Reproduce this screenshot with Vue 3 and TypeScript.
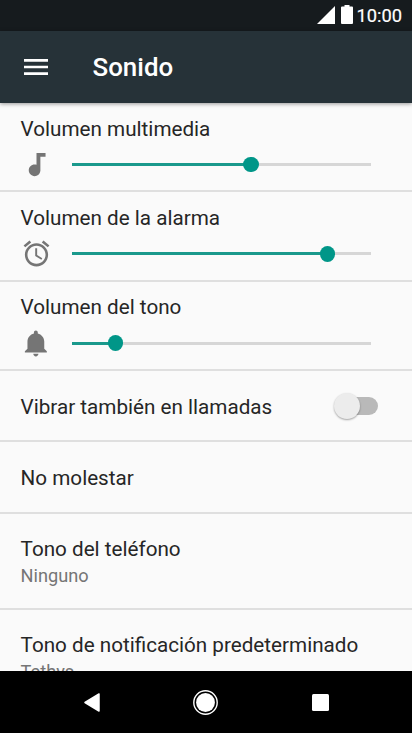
<script setup lang="ts">
import { ref } from 'vue'

interface VolumeSetting {
  id: string
  label: string
  value: number
  path: string
}

interface Preference {
  title: string
  summary?: string
}

const volumes = ref<VolumeSetting[]>([
  {
    id: 'media',
    label: 'Volumen multimedia',
    value: 59.9,
    path: 'M12 3v9.28c-.47-.17-.97-.28-1.5-.28C8.01 12 6 14.01 6 16.5S8.01 21 10.5 21c2.31 0 4.2-1.75 4.45-4H15V6h4V3h-7z',
  },
  {
    id: 'alarm',
    label: 'Volumen de la alarma',
    value: 85.4,
    path: 'M22 5.72l-4.6-3.86-1.29 1.53 4.6 3.86L22 5.72zM7.88 3.39L6.6 1.86 2 5.71l1.29 1.53 4.59-3.85zM12.5 8H11v6l4.75 2.85.75-1.23-4-2.37V8zM12 4c-4.97 0-9 4.03-9 9s4.02 9 9 9c4.97 0 9-4.03 9-9s-4.03-9-9-9zm0 16c-3.87 0-7-3.13-7-7s3.13-7 7-7 7 3.13 7 7-3.13 7-7 7z',
  },
  {
    id: 'ring',
    label: 'Volumen del tono',
    value: 14.5,
    path: 'M11.5 22c1.1 0 2-.9 2-2h-4c0 1.1.9 2 2 2zm6.500-6v-5.500c0-3.070-2.130-5.640-5-6.320V3.500c0-.830-.670-1.500-1.500-1.500S10 2.670 10 3.500v.680c-2.870.680-5 3.250-5 6.320V16l-2 2v1h17v-1l-2-2z',
  },
])

const vibrate = ref(false)

const preferences: Preference[] = [
  { title: 'No molestar' },
  { title: 'Tono del teléfono', summary: 'Ninguno' },
  { title: 'Tono de notificación predeterminado', summary: 'Tethys' },
]
</script>

<template>
  <div class="screen">
    <div class="status">
      <svg class="signal" viewBox="0 0 18 18"><path d="M18 0v18H0z" /></svg>
      <svg class="battery" viewBox="0 0 12 19"><path d="M3.500 0h5v1.500H11q1 0 1 1v15.500q0 1-1 1H1q-1 0-1-1V2.500q0-1 1-1h2.500z" /></svg>
      <span class="time">10:00</span>
    </div>

    <header class="appbar">
      <svg class="menu" viewBox="0 0 24 24"><path d="M3 18h18v-2H3v2zm0-5h18v-2H3v2zm0-7v2h18V6H3z" /></svg>
      <h1 class="title">Sonido</h1>
    </header>

    <main class="list">
      <section v-for="v in volumes" :key="v.id" class="volume">
        <div class="label">{{ v.label }}</div>
        <div class="control">
          <svg class="icon" viewBox="0 0 24 24"><path :d="v.path" /></svg>
          <div class="track">
            <div class="fill" :style="{ width: v.value + '%' }"></div>
            <div class="knob"></div>
          </div>
        </div>
      </section>

      <section class="row" @click="vibrate = !vibrate">
        <div class="label">Vibrar también en llamadas</div>
        <div class="switch" :class="{ on: vibrate }"><div class="thumb"></div></div>
      </section>

      <section v-for="p in preferences" :key="p.title" class="row" :class="{ double: p.summary }">
        <div>
          <div class="label">{{ p.title }}</div>
          <div v-if="p.summary" class="summary">{{ p.summary }}</div>
        </div>
      </section>
    </main>

    <nav class="nav">
      <svg class="back" viewBox="0 0 16 19"><path d="M15 1v17L1 9.500z" /></svg>
      <svg class="home" viewBox="0 0 25 25">
        <circle class="ring" cx="12.5" cy="12.5" r="11.7" />
        <circle cx="12.5" cy="12.5" r="9.4" />
      </svg>
      <div class="recent"></div>
    </nav>
  </div>
</template>

<style>
body {
  margin: 0;
  background: #fafafa;
}
</style>

<style scoped>
.screen {
  display: flex;
  flex-direction: column;
  width: 412px;
  height: 733px;
  overflow: hidden;
  background: #fafafa;
  color: #262626;
  font-family: Roboto, sans-serif;
}

.status {
  display: flex;
  align-items: flex-start;
  flex: none;
  box-sizing: border-box;
  height: 31px;
  padding: 5px 10px 0 0;
  justify-content: flex-end;
  background: #161b1e;
  color: #fff;
}

.status svg {
  fill: #fff;
}

.signal {
  width: 18px;
  height: 18px;
  margin: 1px 6px 0 0;
}

.battery {
  width: 12px;
  height: 19px;
  margin-right: 3px;
}

.time {
  width: 46px;
  font-size: 18.3px;
  font-weight: 400;
  line-height: 22px;
  text-align: right;
  -webkit-text-stroke: 0.2px #fff;
}

.appbar {
  position: relative;
  display: flex;
  align-items: center;
  flex: none;
  box-sizing: border-box;
  height: 72px;
  padding-left: 20px;
  background: #263238;
  box-shadow: 0 1px 4px rgba(0, 0, 0, 0.4);
}

.menu {
  width: 32px;
  height: 32px;
  fill: #fff;
}

.title {
  margin: 0 0 0 40.5px;
  color: #fff;
  font-size: 25.9px;
  font-weight: 500;
  line-height: 30px;
}

.list {
  flex: 1;
  min-height: 0;
  overflow: hidden;
}

.volume {
  box-sizing: border-box;
  height: 89.3px;
  padding: 13.6px 41px 0 20.6px;
  border-bottom: 2px solid #dfdfdf;
}

.label {
  font-size: 20.66px;
  line-height: 24px;
  white-space: nowrap;
}

.control {
  display: flex;
  align-items: center;
  height: 31px;
  margin-top: 8.4px;
}

.icon {
  flex: none;
  width: 31px;
  height: 31px;
  margin-right: 20.4px;
  fill: #757575;
}

.track {
  display: flex;
  align-items: center;
  flex: 1;
  height: 3px;
  background: #d6d6d6;
}

.fill {
  flex: none;
  height: 3px;
  background: #1a998c;
}

.knob {
  flex: none;
  width: 15.6px;
  height: 15.6px;
  margin-left: -7.8px;
  border-radius: 50%;
  background: #009688;
}

.row {
  display: flex;
  align-items: center;
  justify-content: space-between;
  box-sizing: border-box;
  height: 71.4px;
  padding: 2px 34px 0 20.6px;
  border-bottom: 2px solid #dfdfdf;
}

.double {
  height: 96px;
  padding-top: 4px;
}

.summary {
  margin-top: 3px;
  color: #757575;
  font-size: 18.2px;
  line-height: 24px;
}

.switch {
  display: flex;
  align-items: center;
  width: 40px;
  height: 18px;
  margin-top: -2px;
  border-radius: 9px;
  background: #b9b9b9;
}

.thumb {
  width: 26px;
  height: 26px;
  margin-left: -4px;
  border-radius: 50%;
  background: #ececec;
  box-shadow: 0 1px 2px rgba(0, 0, 0, 0.35);
}

.switch.on {
  justify-content: flex-end;
  background: #80cbc4;
}

.nav {
  display: flex;
  align-items: center;
  justify-content: space-between;
  flex: none;
  box-sizing: border-box;
  height: 62px;
  padding: 0 83px 0 84px;
  background: #000;
}

.nav svg {
  fill: #fff;
}

.back {
  width: 16px;
  height: 19px;
}

.back path {
  stroke: #fff;
  stroke-width: 1.5;
  stroke-linejoin: round;
}

.home {
  width: 25px;
  height: 25px;
  margin: 0 1px 0 -1px;
}

.home .ring {
  fill: none;
  stroke: #fff;
  stroke-width: 1.4;
}

.recent {
  width: 17px;
  height: 17px;
  border-radius: 1.5px;
  background: #fff;
}
</style>
